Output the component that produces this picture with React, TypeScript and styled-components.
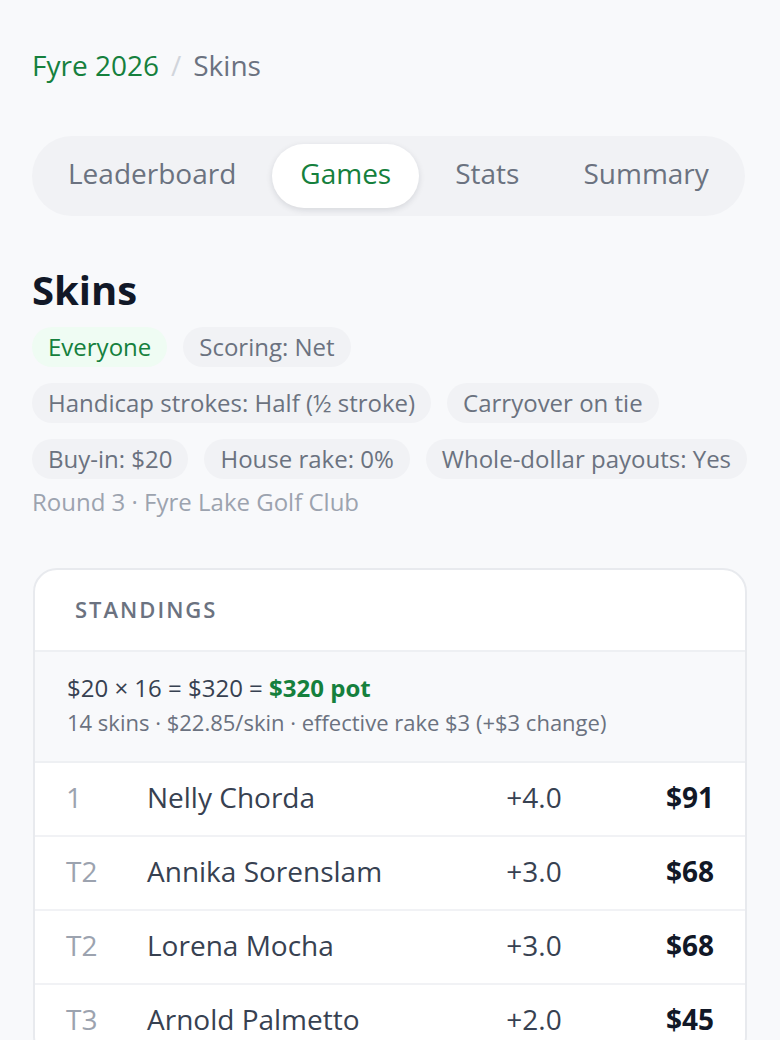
import React from "react";
import styled, { createGlobalStyle } from "styled-components";

const GlobalStyle = createGlobalStyle`
  html, body { margin: 0; padding: 0; background: #f8f9fb; }
  body { font-family: "Open Sans", "Noto Sans", sans-serif; -webkit-font-smoothing: antialiased; }
  * { box-sizing: border-box; }
`;

const Page = styled.div`
  padding: 44px 32px 40px;
  min-height: 1040px;
  background: #f8f9fb;
`;

const Breadcrumb = styled.nav`
  display: flex;
  align-items: center;
  gap: 12px;
  font-size: 28px;
  line-height: 42px;
`;

const Crumb = styled.span<{ $active?: boolean }>`
  color: ${(p) => (p.$active ? "#15803d" : "#6b7280")};
`;

const Sep = styled.span`
  color: #d1d5db;
`;

const Tabs = styled.div`
  display: inline-flex;
  gap: 8px;
  padding: 8px;
  margin-top: 50px;
  background: #f1f2f5;
  border-radius: 40px;
`;

const Tab = styled.div<{ $active?: boolean }>`
  padding: 0 28px 6px;
  height: 64px;
  display: flex;
  align-items: center;
  font-size: 28px;
  border-radius: 32px;
  color: ${(p) => (p.$active ? "#15803d" : "#6b7280")};
  background: ${(p) => (p.$active ? "#ffffff" : "transparent")};
  box-shadow: ${(p) => (p.$active ? "0 2px 6px rgba(17,24,39,0.12)" : "none")};
`;

const Title = styled.h1`
  margin: 48px 0 0;
  font-size: 40px;
  line-height: 52px;
  font-weight: 700;
  color: #111827;
`;

const Chips = styled.div`
  display: flex;
  flex-wrap: wrap;
  gap: 16px;
  margin-top: 11px;
  margin-right: -8px;
`;

const Chip = styled.span<{ $green?: boolean }>`
  height: 40px;
  padding: 0 16px 1px;
  display: inline-flex;
  align-items: center;
  border-radius: 20px;
  font-size: 24px;
  white-space: nowrap;
  background: ${(p) => (p.$green ? "#effcf3" : "#f1f2f5")};
  color: ${(p) => (p.$green ? "#15803d" : "#6b7280")};
`;

const Meta = styled.div`
  margin-top: 5px;
  font-size: 24px;
  line-height: 36px;
  color: #9ca3af;
`;

const Card = styled.section`
  margin-top: 48px;
  margin-left: 1px;
  margin-right: 1px;
  background: #ffffff;
  border: 2px solid #e8eaee;
  border-radius: 24px;
  overflow: hidden;
`;

const CardHeader = styled.div`
  padding: 22px 40px 24px 40px;
  font-size: 22px;
  line-height: 34px;
  font-weight: 600;
  letter-spacing: 2px;
  color: #6b7280;
  border-bottom: 2px solid #eef0f3;
`;

const Summary = styled.div`
  padding: 18px 32px 23px;
  background: #f8f9fb;
  border-bottom: 2px solid #eef0f3;
`;

const SummaryMain = styled.div`
  font-size: 24px;
  line-height: 36px;
  color: #374151;
`;

const Pot = styled.span`
  color: #15803d;
  font-weight: 700;
`;

const SummarySub = styled.div`
  font-size: 22px;
  line-height: 32px;
  color: #6b7280;
`;

const Row = styled.div`
  display: grid;
  grid-template-columns: 81px 1fr 120px 120px;
  align-items: center;
  height: 74px;
  padding: 0 31px 4px 31px;
  border-bottom: 2px solid #f1f2f5;
  font-size: 28px;
`;

const Rank = styled.span`
  color: #9ca3af;
`;

const Name = styled.span`
  color: #374151;
`;

const Score = styled.span`
  color: #374151;
  text-align: center;
`;

const Amount = styled.span`
  color: #111827;
  font-weight: 700;
  text-align: right;
`;

const standings = [
  { rank: "1", name: "Nelly Chorda", score: "+4.0", amount: "$91" },
  { rank: "T2", name: "Annika Sorenslam", score: "+3.0", amount: "$68" },
  { rank: "T2", name: "Lorena Mocha", score: "+3.0", amount: "$68" },
  { rank: "T3", name: "Arnold Palmetto", score: "+2.0", amount: "$45" },
];

export default function App() {
  return (
    <>
      <GlobalStyle />
      <Page>
        <Breadcrumb>
          <Crumb $active>Fyre 2026</Crumb>
          <Sep>/</Sep>
          <Crumb>Skins</Crumb>
        </Breadcrumb>
        <Tabs>
          <Tab>Leaderboard</Tab>
          <Tab $active>Games</Tab>
          <Tab>Stats</Tab>
          <Tab>Summary</Tab>
        </Tabs>
        <Title>Skins</Title>
        <Chips>
          <Chip $green>Everyone</Chip>
          <Chip>Scoring: Net</Chip>
          <Chip>Handicap strokes: Half (½ stroke)</Chip>
          <Chip>Carryover on tie</Chip>
          <Chip>Buy-in: $20</Chip>
          <Chip>House rake: 0%</Chip>
          <Chip>Whole-dollar payouts: Yes</Chip>
        </Chips>
        <Meta>Round 3 · Fyre Lake Golf Club</Meta>
        <Card>
          <CardHeader>STANDINGS</CardHeader>
          <Summary>
            <SummaryMain>
              $20 × 16 = $320 = <Pot>$320 pot</Pot>
            </SummaryMain>
            <SummarySub>14 skins · $22.85/skin · effective rake $3 (+$3 change)</SummarySub>
          </Summary>
          {standings.map((s, i) => (
            <Row key={i}>
              <Rank>{s.rank}</Rank>
              <Name>{s.name}</Name>
              <Score>{s.score}</Score>
              <Amount>{s.amount}</Amount>
            </Row>
          ))}
        </Card>
      </Page>
    </>
  );
}
